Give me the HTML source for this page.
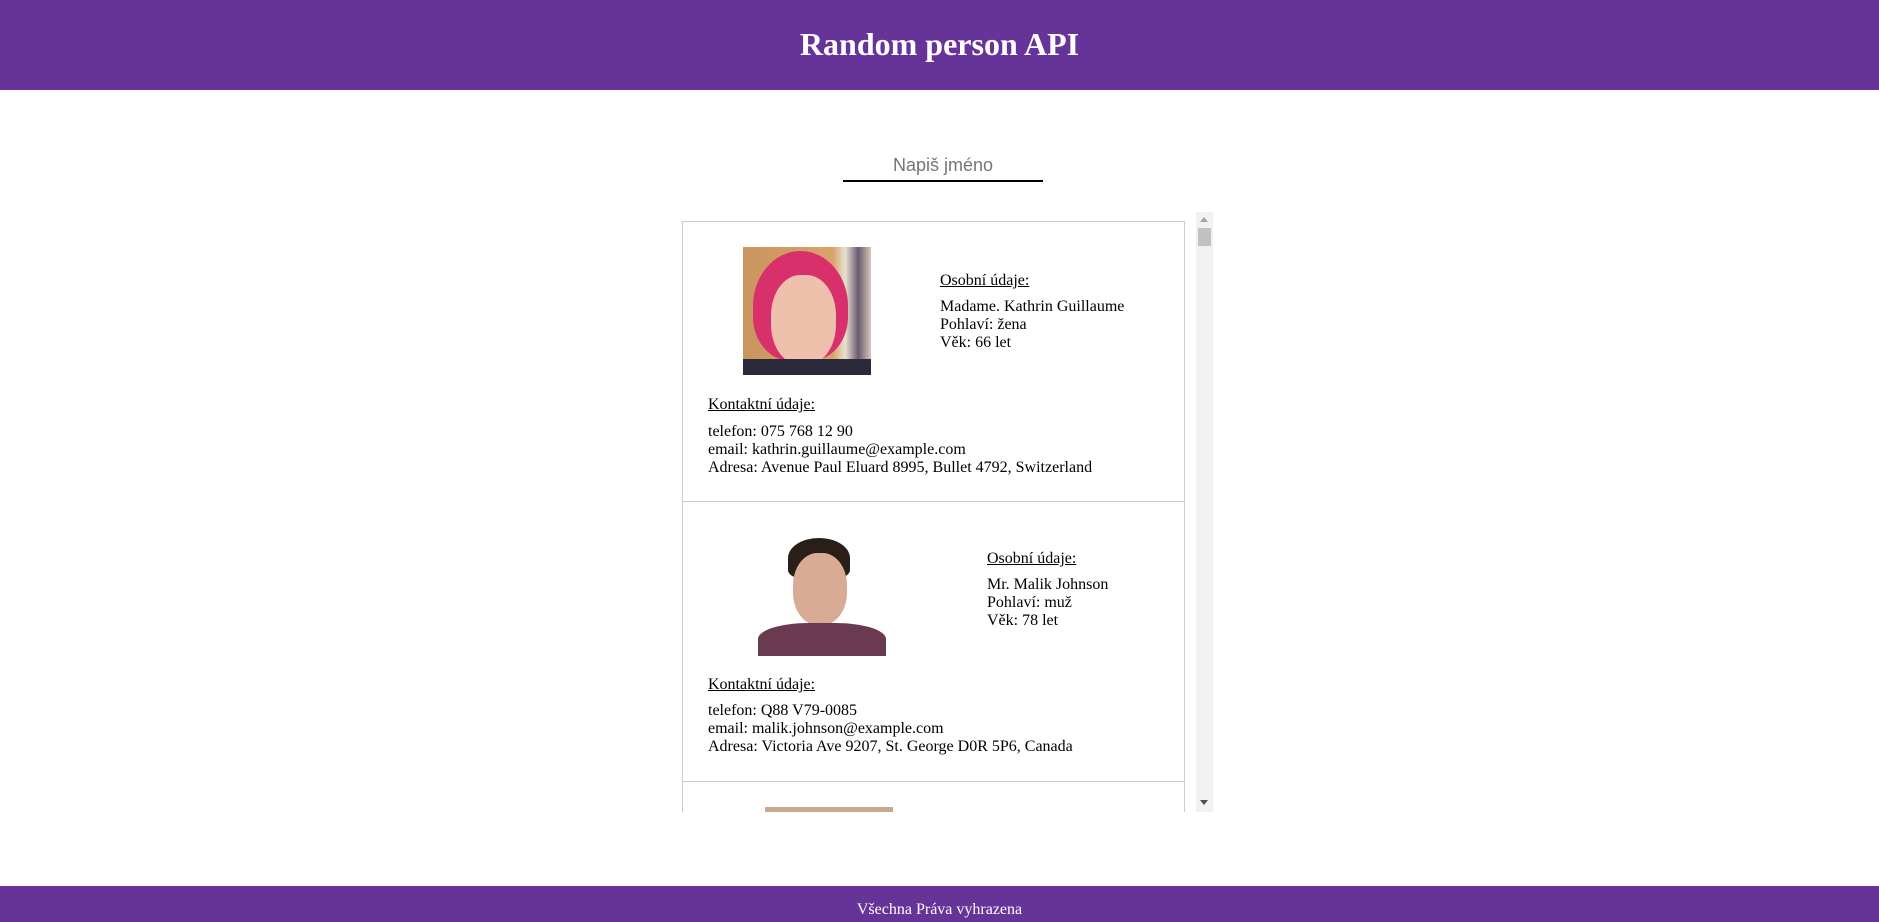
<!DOCTYPE html>
<html><head><meta charset="utf-8"><style>
*{margin:0;padding:0;box-sizing:border-box}
html,body{width:1879px;height:922px;overflow:hidden}
body{position:relative;background:#fff;font-family:"Liberation Serif",serif;color:#000}
header{position:absolute;left:0;top:0;width:1879px;height:90px;background:#663399;color:#fff;text-align:center;font-weight:bold;font-size:32px;line-height:88px}
.inp{position:absolute;left:843px;top:151px;width:200px;height:31px;border-bottom:2px solid #000;text-align:center;font-family:"Liberation Sans",sans-serif;font-size:18px;color:#757575;line-height:28px}
.list{position:absolute;left:682px;top:212px;width:514px;height:600px;overflow:hidden}
.card{position:absolute;left:0;width:503px;border:1px solid #ccc;background:#fff}
.t{position:absolute;font-size:16px;line-height:18px;white-space:nowrap}
.u{text-decoration:underline}
.sb{position:absolute;left:1196px;top:212px;width:17px;height:600px;background:#f1f1f1}
footer{position:absolute;left:0;top:886px;width:1879px;height:36px;background:#663399;color:#fff;text-align:center;font-size:16px;line-height:48px}
</style></head><body>
<header>Random person API</header>
<div class="inp">Napiš jméno</div>
<div class="list">
 <div class="card" style="top:9px;height:282px">
  <div style="position:absolute;left:60px;top:25px;width:128px;height:128px;background:linear-gradient(90deg,#c9945e 0%,#d9a36a 70%,#e8e0d0 80%,#6a5a70 90%,#d8c8b8 100%);overflow:hidden">
   <div style="position:absolute;left:10px;top:4px;width:95px;height:110px;border-radius:50% 50% 40% 40%;background:#d8306a"></div>
   <div style="position:absolute;left:28px;top:28px;width:65px;height:90px;border-radius:45%;background:#efc1ad"></div>
   <div style="position:absolute;left:0;top:112px;width:128px;height:16px;background:#2a2a3a"></div>
  </div>
  <div class="t u" style="left:257px;top:50px">Osobní údaje:</div>
  <div class="t" style="left:257px;top:76px">Madame. Kathrin Guillaume<br>Pohlaví: žena<br>Věk: 66 let</div>
  <div class="t u" style="left:25px;top:174px">Kontaktní údaje:</div>
  <div class="t" style="left:25px;top:201px">telefon: 075 768 12 90<br>email: kathrin.guillaume@example.com<br>Adresa: Avenue Paul Eluard 8995, Bullet 4792, Switzerland</div>
 </div>
 <div class="card" style="top:289px;height:282px">
  <div style="position:absolute;left:75px;top:26px;width:128px;height:128px;background:#fff;overflow:hidden">
   <div style="position:absolute;left:30px;top:10px;width:62px;height:40px;border-radius:50% 50% 20% 20%;background:#2a1e18"></div>
   <div style="position:absolute;left:35px;top:25px;width:54px;height:72px;border-radius:45%;background:#d9ab95"></div>
   <div style="position:absolute;left:0;top:95px;width:128px;height:40px;border-radius:40% 40% 0 0;background:#6a3a50"></div>
  </div>
  <div class="t u" style="left:304px;top:48px">Osobní údaje:</div>
  <div class="t" style="left:304px;top:74px">Mr. Malik Johnson<br>Pohlaví: muž<br>Věk: 78 let</div>
  <div class="t u" style="left:25px;top:174px">Kontaktní údaje:</div>
  <div class="t" style="left:25px;top:200px">telefon: Q88 V79-0085<br>email: malik.johnson@example.com<br>Adresa: Victoria Ave 9207, St. George D0R 5P6, Canada</div>
 </div>
 <div class="card" style="top:569px;height:282px">
  <div style="position:absolute;left:82px;top:25px;width:128px;height:128px;background:#c8a890"></div>
 </div>
</div>
<div class="sb">
 <div style="position:absolute;left:4px;top:5px;width:0;height:0;border-left:4px solid transparent;border-right:4px solid transparent;border-bottom:5px solid #a3a3a3"></div>
 <div style="position:absolute;left:2px;top:16px;width:13px;height:18px;background:#c1c1c1"></div>
 <div style="position:absolute;left:4px;top:588px;width:0;height:0;border-left:4px solid transparent;border-right:4px solid transparent;border-top:5px solid #505050"></div>
</div>
<footer>Všechna Práva vyhrazena</footer>
</body></html>
